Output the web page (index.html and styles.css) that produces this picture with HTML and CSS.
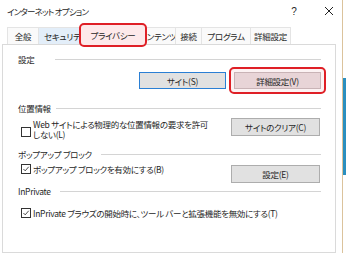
FILE: index.html
```html
<!DOCTYPE html>
<html lang="ja">
<head>
    <meta charset="UTF-8">
    <title>インターネット オプション</title>
    <link rel="stylesheet" href="styles.css">
</head>
<body>
    <div class="screen">
        <div class="dialog">
            <div class="titlebar">
                <span class="title">インターネット オプション</span>
                <span class="help">?</span>
                <svg class="close" width="10" height="10" viewBox="0 0 10 10">
                    <path d="M1 1 L9 9 M9 1 L1 9" stroke="#222" stroke-width="1" fill="none"/>
                </svg>
            </div>

            <div class="tabs">
                <div class="tab tab-general">全般</div>
                <div class="tab tab-security">セキュリティ</div>
                <div class="tab tab-privacy">プライバシー</div>
                <div class="tab tab-content">コンテンツ</div>
                <div class="tab tab-conn">接続</div>
                <div class="tab tab-prog">プログラム</div>
                <div class="tab tab-adv">詳細設定</div>
            </div>

            <div class="page">
                <div class="group-head">
                    <span>設定</span>
                    <span class="line line-wide"></span>
                </div>
                <div class="row row-buttons">
                    <button class="btn btn-default">サイト(S)</button>
                    <span class="mark"><button class="btn btn-marked">詳細設定(V)</button></span>
                </div>

                <div class="group-head head-location">
                    <span>位置情報</span>
                    <span class="line line-tight"></span>
                </div>
                <div class="row row-location">
                    <span class="check"></span>
                    <span class="label label-two">Web サイトによる物理的な位置情報の要求を許可<br>しない(L)</span>
                    <button class="btn btn-side">サイトのクリア(C)</button>
                </div>

                <div class="group-head head-popup">
                    <span>ポップアップ ブロック</span>
                    <span class="line"></span>
                </div>
                <div class="row row-popup">
                    <span class="check checked">
                        <svg width="10" height="10" viewBox="0 0 10 10"><path d="M1.8 5 L4 7.3 L8.4 2.2" stroke="#222" stroke-width="1" fill="none"/></svg>
                    </span>
                    <span class="label">ポップアップ ブロックを有効にする(B)</span>
                    <button class="btn btn-side btn-popup">設定(E)</button>
                </div>

                <div class="group-head head-private">
                    <span>InPrivate</span>
                    <span class="line"></span>
                </div>
                <div class="row row-private">
                    <span class="check checked">
                        <svg width="10" height="10" viewBox="0 0 10 10"><path d="M1.8 5 L4 7.3 L8.4 2.2" stroke="#222" stroke-width="1" fill="none"/></svg>
                    </span>
                    <span class="label">InPrivate ブラウズの開始時に、ツール バーと拡張機能を無効にする(T)</span>
                </div>
            </div>
        </div>

        <div class="side">
            <div class="side-line"></div>
            <div class="side-block"></div>
        </div>
    </div>
</body>
</html>
```

FILE: styles.css
```css
* {
    margin: 0;
    padding: 0;
    box-sizing: border-box;
}

body {
    width: 346px;
    height: 253px;
    overflow: hidden;
    background: #fff;
    font-family: "Noto Sans CJK JP", "Liberation Sans", sans-serif;
    font-size: 8.5px;
    font-feature-settings: "palt" 1;
    letter-spacing: -0.3px;
    color: #262626;
}

.screen {
    display: flex;
    height: 253px;
}

.dialog {
    width: 336px;
    display: flex;
    flex-direction: column;
}

/* title bar */
.titlebar {
    height: 22px;
    display: flex;
    align-items: center;
    padding-left: 7px;
    padding-right: 2px;
}

.title {
    flex: 1;
    letter-spacing: -0.8px;
}

.help {
    width: 10px;
    text-align: center;
    margin-right: 25px;
    font-family: "Liberation Sans", sans-serif;
    font-size: 10px;
}

.close {
    display: block;
}

/* tabs */
.tabs {
    height: 22px;
    display: flex;
    align-items: flex-end;
    padding-left: 7px;
    position: relative;
    z-index: 1;
}

.tab {
    height: 17px;
    line-height: 16px;
    text-align: center;
    white-space: nowrap;
    overflow: hidden;
    background: #fafafa;
    border-top: 1px solid #e4e4e4;
    border-left: 1px solid #e4e4e4;
}

.tab-general { width: 31px; }

.tab-security {
    width: 46px;
    text-align: left;
    padding-left: 5px;
    background: #e3eef9;
}

.tab-privacy {
    width: 68px;
    height: 24px;
    line-height: 20px;
    margin-left: -5px;
    margin-right: -13px;
    margin-bottom: -3px;
    border: 2px solid #df1f26;
    border-radius: 5px;
    background: #fde9ea;
    position: relative;
    z-index: 2;
}

.tab-content {
    width: 41px;
    text-align: left;
    padding-left: 4px;
}

.tab-conn { width: 26px; }
.tab-prog { width: 49px; }

.tab-adv {
    width: 41px;
    border-right: 1px solid #e4e4e4;
}

/* page */
.page {
    flex: 1;
    margin-left: 2px;
    border: 1px solid #dadada;
    background: #fff;
    padding: 8px 14px 0 15px;
}

.group-head {
    display: flex;
    align-items: center;
    height: 12px;
}

.line {
    flex: 1;
    height: 1px;
    background: #d4d4d4;
    margin-left: 9px;
}

.line-wide { margin-left: 21px; }
.line-tight { margin-left: 5px; }

.head-location { margin-top: 13px; }
.head-popup { margin-top: 9px; }
.head-private { margin-top: 2px; }

.row {
    display: flex;
    align-items: center;
}

.row-buttons {
    justify-content: flex-end;
    gap: 8px;
    margin-top: 7px;
}

.row-location {
    margin-top: 4px;
    align-items: flex-start;
}

.row-popup {
    margin-top: 4px;
    align-items: flex-start;
}

.row-private {
    margin-top: 11px;
}

.btn {
    font-family: inherit;
    font-size: 8.5px;
    font-feature-settings: "palt" 1;
    letter-spacing: -0.3px;
    color: #262626;
    width: 87px;
    height: 17px;
    background: #e1e1e1;
    border: 1px solid #adadad;
}

.btn-default {
    border-color: #2a7fd4;
}

.mark {
    display: flex;
    border: 2px solid #df1f26;
    border-radius: 5px;
    padding: 3px;
    margin: -5px;
    background: #fcf2f3;
}

.btn-marked {
    background: #e8d4d7;
    border-color: #c9b3b6;
}

.btn-side {
    width: 89px;
    height: 18px;
    margin-left: auto;
    margin-right: 1px;
}

.btn-popup {
    margin-top: 1px;
}

.check {
    width: 10px;
    height: 10px;
    border: 1px solid #333;
    background: #fff;
    margin-left: 3px;
    flex-shrink: 0;
    display: flex;
    align-items: center;
    justify-content: center;
}

.check svg {
    display: block;
}

.row-location .check {
    margin-top: 9px;
}

.label {
    margin-left: 2px;
    line-height: 10px;
    white-space: nowrap;
}

.label-two {
    line-height: 10px;
    margin-top: 1px;
}

/* desktop edge behind the dialog */
.side {
    flex: 1;
    display: flex;
    padding-left: 6px;
}

.side-line {
    width: 1px;
    background: #dbc39c;
}

.side-block {
    flex: 1;
    margin-top: 78px;
    height: 97px;
    background: #2b8fbf;
}
```
